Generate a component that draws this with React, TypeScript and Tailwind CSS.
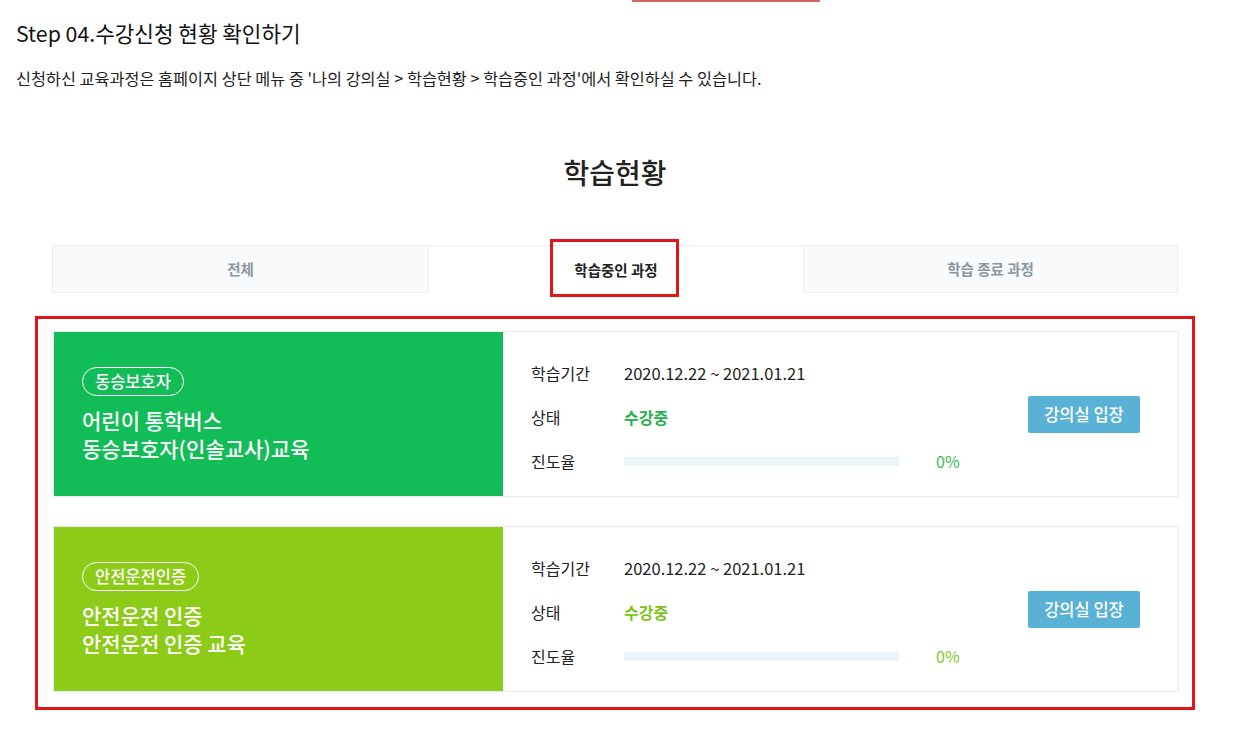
import React from "react";

const font = { fontFamily: '"Noto Sans CJK KR", "Noto Sans", sans-serif' };

type Course = {
  badge: string;
  title: [string, string];
  panel: string;
  accent: string;
};

const courses: Course[] = [
  {
    badge: "동승보호자",
    title: ["어린이 통학버스", "동승보호자(인솔교사)교육"],
    panel: "bg-[#12bd57]",
    accent: "text-[#26b04d]",
  },
  {
    badge: "안전운전인증",
    title: ["안전운전 인증", "안전운전 인증 교육"],
    panel: "bg-[#8dcb19]",
    accent: "text-[#7dc31c]",
  },
];

function CourseCard({ c, pctColor }: { c: Course; pctColor: string }) {
  return (
    <div className="flex h-[166px] border border-[#e6edf0]">
      <div className={`flex w-[449px] shrink-0 flex-col justify-center pl-[28px] ${c.panel}`}>
        <div className="flex">
          <span className="flex h-[29px] items-center rounded-full border border-white px-[12px] text-[16.5px] font-medium text-white">
            {c.badge}
          </span>
        </div>
        <div className="mt-[10px] text-[21px] font-medium leading-[28px] text-white">
          <div>{c.title[0]}</div>
          <div>{c.title[1]}</div>
        </div>
      </div>
      <div className="flex flex-1 items-center justify-between bg-white pl-[28px] pr-[38px]">
        <div className="flex flex-col gap-[18px] pt-[6px] text-[16px] leading-[26px] text-[#222]">
          <div className="flex items-center">
            <span className="w-[93px]">학습기간</span>
            <span className="text-[16.5px]">2020.12.22 ~ 2021.01.21</span>
          </div>
          <div className="flex items-center">
            <span className="w-[93px]">상태</span>
            <span className={`font-bold ${c.accent}`}>수강중</span>
          </div>
          <div className="flex items-center">
            <span className="w-[93px]">진도율</span>
            <span className="h-[9px] w-[275px] bg-[#eaf4f8]" />
            <span className={`ml-[37px] ${pctColor}`}>0%</span>
          </div>
        </div>
        <button className="flex h-[37px] w-[112px] items-center justify-center rounded-[2px] bg-[#59b2d5] text-[16.5px] font-medium text-white">
          강의실 입장
        </button>
      </div>
    </div>
  );
}

export default function App() {
  return (
    <div className="relative h-[738px] w-[1242px] overflow-hidden bg-white" style={font}>
      <div className="ml-[632px] h-[2px] w-[188px] bg-[#d46565]" />
      <div className="px-4">
        <h2 className="mt-[17px] text-[21.3px] font-normal leading-[28px] text-[#111]">
          Step 04.수강신청 현황 확인하기
        </h2>
        <p className="mt-[20px] text-[16.3px] leading-[22px] text-[#222]">
          신청하신 교육과정은 홈페이지 상단 메뉴 중 '나의 강의실 &gt; 학습현황 &gt; 학습중인 과정'에서 확인하실 수 있습니다.
        </p>
      </div>

      <div className="ml-[52px] w-[1126px]">
        <h1 className="mt-[63px] text-center text-[28px] font-medium leading-[40px] text-[#222]">학습현황</h1>
        <div className="relative mt-[53px] grid h-[48px] grid-cols-[377px_374px_375px] text-[14.5px] font-bold">
          <div className="flex items-center justify-center border border-[#e8eef1] bg-[#f8fafc] text-[#8b98a2]">전체</div>
          <div className="relative flex items-center justify-center border-t border-[#e8eef1] bg-white text-[#222]">
            학습중인 과정
            <div className="absolute left-[121px] top-[-7px] h-[58px] w-[129px] border-[3px] border-[#e4141b]" />
          </div>
          <div className="flex items-center justify-center border border-[#e8eef1] bg-[#f8fafc] text-[#8b98a2]">학습 종료 과정</div>
        </div>
      </div>

      <div className="ml-[35px] mt-[23px] w-[1160px] border-[3px] border-[#e4141b] pb-[15px] pl-[15px] pr-[13px] pt-[12px]">
        <div className="flex flex-col gap-[29px]">
          <CourseCard c={courses[0]} pctColor="text-[#3dbd59]" />
          <CourseCard c={courses[1]} pctColor="text-[#86c81c]" />
        </div>
      </div>
    </div>
  );
}
